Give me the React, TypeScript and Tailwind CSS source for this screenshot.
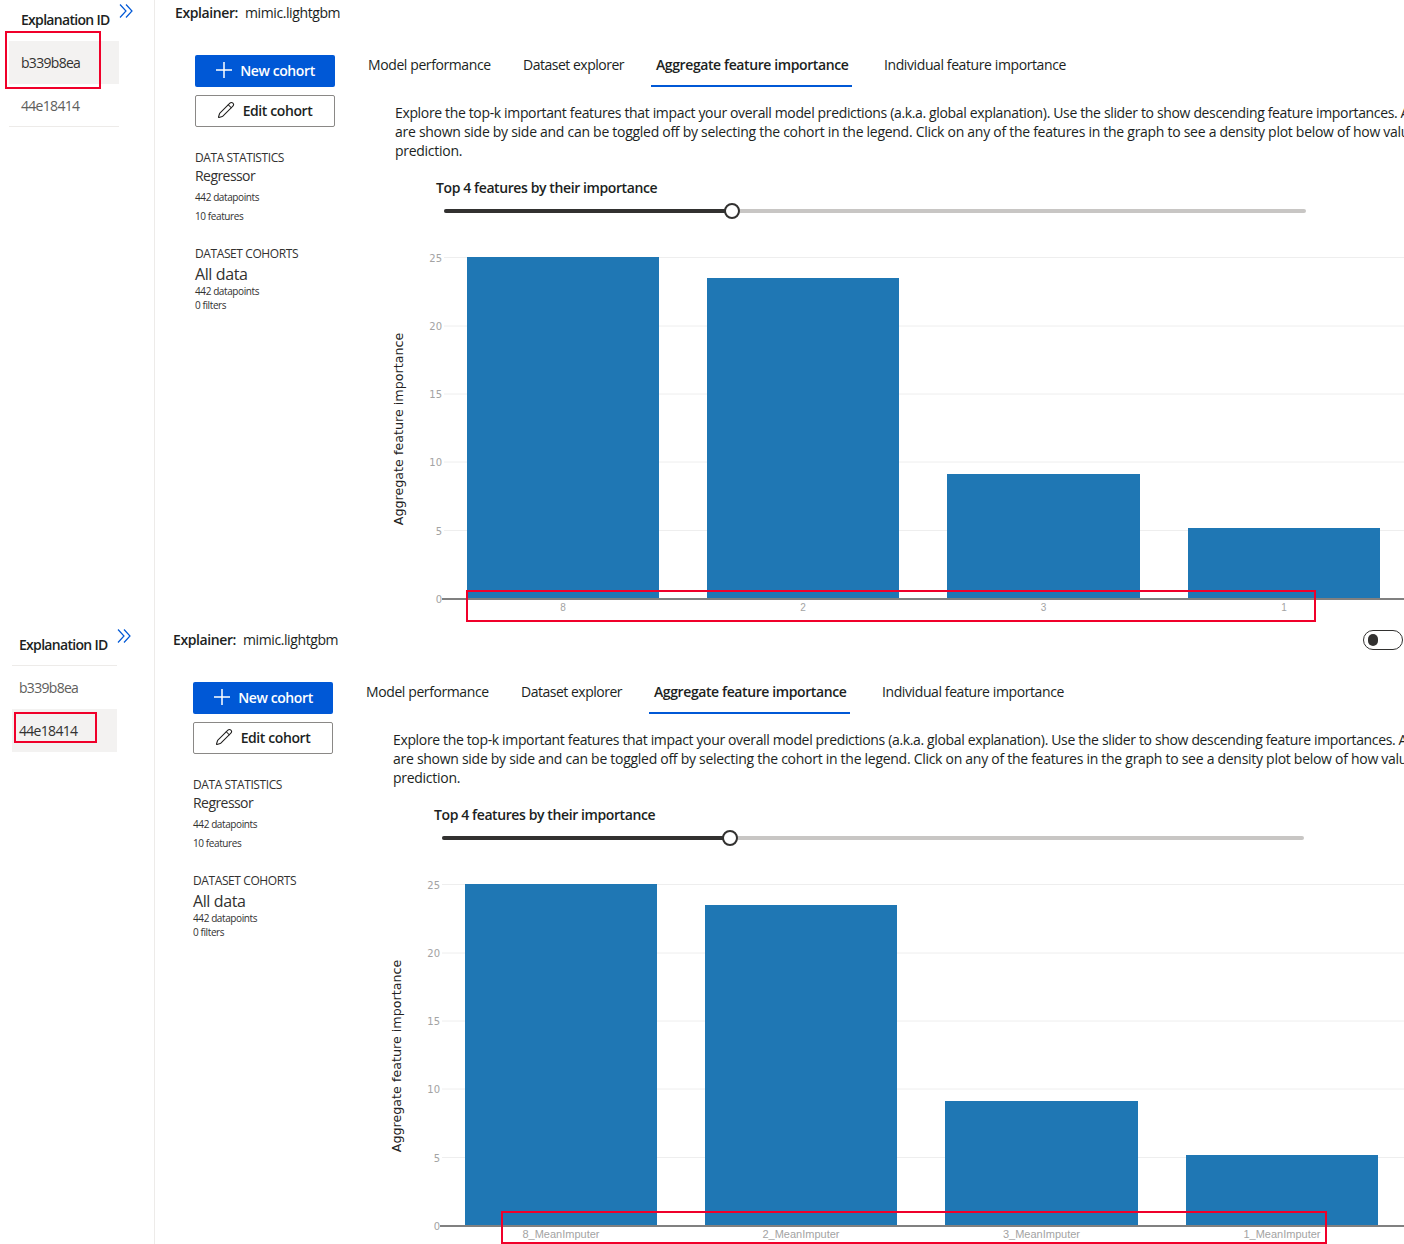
import { Pencil } from "lucide-react";

const ticks = [
  { label: "25", y: 17.5 },
  { label: "20", y: 86 },
  { label: "15", y: 154 },
  { label: "10", y: 222 },
  { label: "5", y: 290.5 },
];

const bars = [
  { x: 87, w: 192, top: 17, name: "8" },
  { x: 327, w: 192, top: 38, name: "2" },
  { x: 567, w: 193, top: 234, name: "3" },
  { x: 808, w: 192, top: 288, name: "1" },
];

function Chart({ suffix }: { suffix: string }) {
  return (
    <svg width="1040" height="385" className="block shrink-0 tracking-normal">
      {ticks.map((t) => (
        <g key={t.label}>
          <line x1="64" x2="1040" y1={t.y} y2={t.y} stroke="#eeeeee" />
          <text x="62" y={t.y + 4} textAnchor="end" fontSize="10" fill="#a3a3a3" fontFamily="'DejaVu Sans', sans-serif">
            {t.label}
          </text>
        </g>
      ))}
      <text x="62" y="363" textAnchor="end" fontSize="10" fill="#a3a3a3" fontFamily="'DejaVu Sans', sans-serif">
        0
      </text>
      {bars.map((b) => (
        <g key={b.name}>
          <rect x={b.x} y={b.top} width={b.w} height={359 - b.top} fill="#1f77b4" />
          <text
            x={b.x + b.w / 2}
            y="371"
            textAnchor="middle"
            fontSize={suffix ? "11" : "10"}
            fill="#a3a3a3"
            fontFamily="'Liberation Sans', sans-serif"
          >
            {b.name}
            {suffix}
          </text>
        </g>
      ))}
      <line x1="62" x2="1040" y1="359" y2="359" stroke="#808080" strokeWidth="2" />
      <text
        transform="translate(23 189) rotate(-90)"
        textAnchor="middle"
        fontSize="12.7"
        fill="#222222"
        fontFamily="'DejaVu Sans', sans-serif"
      >
        Aggregate feature importance
      </text>
    </svg>
  );
}

function Chevrons() {
  return (
    <svg width="14" height="14" viewBox="0 0 14 14" fill="none" stroke="#0058d6" strokeWidth="1.2">
      <path d="M1 0.5 7 7 1 13.5" />
      <path d="M7 0.5 13 7 7 13.5" />
    </svg>
  );
}

function Plus() {
  return (
    <svg width="18" height="18" viewBox="0 0 18 18" stroke="#ffffff" strokeWidth="1.5">
      <path d="M9 1v16M1 9h16" />
    </svg>
  );
}

const tabs = [
  { label: "Model performance", box: "w-[155px] pl-[4px]" },
  { label: "Dataset explorer", box: "w-[132px] pl-[4px] tracking-[-0.035em]" },
  { label: "Aggregate feature importance", box: "w-[201px] pl-[5px] font-semibold border-b-2 border-[#0058d6]" },
  { label: "Individual feature importance", box: "ml-[28px] w-[200px] pl-[4px]" },
];

function Panel({ second }: { second?: boolean }) {
  return (
    <section className={second ? "relative flex h-[617px]" : "relative flex h-[627px]"}>
      <aside className="w-[155px] shrink-0 border-r border-[#edebe9]">
        <div className={second ? "ml-[12px] w-[105px]" : "ml-[9px] w-[110px]"}>
          <div
            className={
              second
                ? "relative h-[39px] border-b border-[#edebe9] pl-[7px] pt-[8px] text-[14px] font-semibold leading-[20px] tracking-[-0.05em] text-[#201f1e]"
                : "relative h-[41px] pl-[12px] pt-[10px] text-[14px] font-semibold leading-[20px] tracking-[-0.05em] text-[#201f1e]"
            }
          >
            Explanation ID
            <span className={second ? "absolute left-[105px] top-[2px]" : "absolute left-[110px] top-[4px]"}>
              <Chevrons />
            </span>
          </div>
          <div className={second ? "h-[43px] pl-[7px] pt-[12px] text-[14px] leading-[20px] tracking-[-0.05em] text-[#605e5c]" : "h-[43px] bg-[#f3f2f1] pl-[12px] pt-[12px] text-[14px] leading-[20px] tracking-[-0.05em] text-[#323130]"}>
            b339b8ea
          </div>
          <div className={second ? "h-[43px] bg-[#f3f2f1] pl-[7px] pt-[12px] text-[14px] leading-[20px] tracking-[-0.05em] text-[#323130]" : "h-[43px] border-b border-[#edebe9] pl-[12px] pt-[12px] text-[14px] leading-[20px] tracking-[-0.05em] text-[#605e5c]"}>
            44e18414
          </div>
        </div>
      </aside>

      <main className={second ? "min-w-0 flex-1 overflow-hidden pl-[18px]" : "min-w-0 flex-1 overflow-hidden pl-[20px]"}>
        <div className="flex h-[26px] items-center justify-between pr-[1px] text-[14px] text-[#201f1e]">
          <p className="pb-[2px]">
            <span className="font-semibold">Explainer:</span>
            <span className="ml-[7px]">mimic.lightgbm</span>
          </p>
          {second && (
            <span className="flex h-[20px] w-[40px] items-center rounded-full border border-[#323130] pl-[4px]">
              <span className="h-[12px] w-[10px] rounded-full bg-[#323130]" />
            </span>
          )}
        </div>

        <div className="mt-[29px] flex">
          <div className="ml-[20px] w-[140px] shrink-0 text-[#323130]">
            <button className="flex h-[32px] w-full items-center justify-center gap-[7px] rounded-[2px] bg-[#0058d6] pb-[2px] text-[14px] font-semibold text-white">
              <Plus />
              New cohort
            </button>
            <button className="mt-[8px] flex h-[32px] w-full items-center justify-center gap-[8px] rounded-[2px] border border-[#8a8886] bg-white pb-[2px] pr-[1px] text-[14px] font-semibold text-[#201f1e]">
              <Pencil size={18} strokeWidth={1.4} />
              Edit cohort
            </button>
            <p className="mt-[22px] text-[12px] leading-[18px]">DATA STATISTICS</p>
            <p className="-mt-[1px] text-[14px] leading-[20px] tracking-[-0.04em]">Regressor</p>
            <p className="mt-[3px] text-[10px] leading-[16px]">442 datapoints</p>
            <p className="mt-[3px] text-[10px] leading-[16px]">10 features</p>
            <p className="mt-[21px] text-[12px] leading-[18px]">DATASET COHORTS</p>
            <p className="text-[16px] leading-[22px]">All data</p>
            <p className="-mt-[1px] text-[10px] leading-[14px]">442 datapoints</p>
            <p className="text-[10px] leading-[14px]">0 filters</p>
          </div>

          <div className="ml-[29px] min-w-0 flex-1">
            <div className="flex h-[32px] text-[14px] leading-[20px] text-[#201f1e]">
              {tabs.map((t) => (
                <div key={t.label} className={"shrink-0 whitespace-nowrap " + t.box}>
                  {t.label}
                </div>
              ))}
            </div>
            <div className="ml-[31px] mt-[16px] whitespace-nowrap text-[14px] leading-[19px] text-[#201f1e]">
              <p className="tracking-[-0.025em]">Explore the top-k important features that impact your overall model predictions (a.k.a. global explanation). Use the slider to show descending feature importances. All cohorts' feature importances</p>
              <p className="tracking-[-0.02em]">are shown side by side and can be toggled off by selecting the cohort in the legend. Click on any of the features in the graph to see a density plot below of how values of the selected feature impact</p>
              <p className="tracking-[-0.02em]">prediction.</p>
            </div>
            <p className="ml-[72px] mt-[18px] text-[14px] font-semibold leading-[20px] text-[#201f1e]">Top 4 features by their importance</p>
            <div className="relative ml-[80px] mt-[5px] flex h-[16px] w-[862px] items-center">
              <div className="h-[4px] w-full rounded-full bg-[#c8c6c4]">
                <div className="h-[4px] w-[288px] rounded-full bg-[#323130]" />
              </div>
              <span className="absolute left-[280px] top-0 h-[16px] w-[16px] rounded-full border-2 border-[#323130] bg-white" />
            </div>
            <div className="ml-[16px] mt-[21px]">
              <Chart suffix={second ? "_MeanImputer" : ""} />
            </div>
          </div>
        </div>
      </main>

      {second ? (
        <>
          <div className="absolute left-[14px] top-[85px] h-[31px] w-[83px] border-2 border-[#f0002a]" />
          <div className="absolute left-[501px] top-[584px] h-[33px] w-[826px] border-2 border-[#f0002a]" />
        </>
      ) : (
        <>
          <div className="absolute left-[5px] top-[31px] h-[58px] w-[96px] border-2 border-[#f0002a]" />
          <div className="absolute left-[466px] top-[590px] h-[32px] w-[850px] border-2 border-[#f0002a]" />
        </>
      )}
    </section>
  );
}

export default function App() {
  return (
    <div
      className="h-[1244px] w-[1404px] overflow-hidden bg-white tracking-[-0.025em]"
      style={{ fontFamily: "'Open Sans', sans-serif" }}
    >
      <Panel />
      <Panel second />
    </div>
  );
}
